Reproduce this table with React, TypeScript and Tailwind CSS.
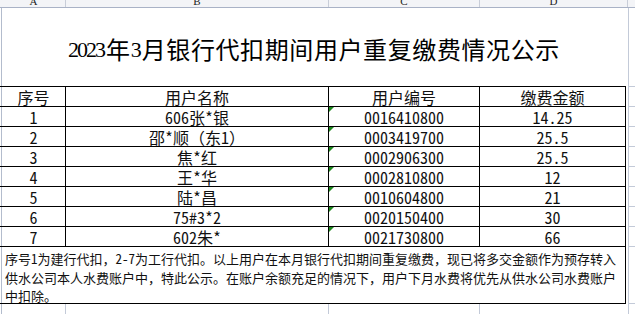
import React from 'react';

// 银行代扣重复缴费公示表（Excel 截图样式）
interface PayRow {
    no: string;
    name: string;
    id: string;
    amount: string;
}

const rows: PayRow[] = [
    { no: '1', name: '606张*银', id: '0016410800', amount: '14.25' },
    { no: '2', name: '邵*顺（东1）', id: '0003419700', amount: '25.5' },
    { no: '3', name: '焦*红', id: '0002906300', amount: '25.5' },
    { no: '4', name: '王*华', id: '0002810800', amount: '12' },
    { no: '5', name: '陆*昌', id: '0010604800', amount: '21' },
    { no: '6', name: '75#3*2', id: '0020150400', amount: '30' },
    { no: '7', name: '602朱*', id: '0021730800', amount: '66' },
];

const cellFont = { fontFamily: '"Noto Sans Mono CJK SC", "Noto Sans CJK SC", monospace' };

// 右侧 E 列的网格线
const ColE = () => (
    <div className="w-[9px] pl-[2px] flex">
        <div className="flex-1 border-l border-b border-[#c3cad8]" />
    </div>
);

const Gutter = () => <div className="w-[2px] border-r border-[#b3bccd] flex-shrink-0" />;

export default function App() {
    return (
        <div className="w-[635px] h-[314px] overflow-hidden bg-white text-[#111]">
            {/* 列标 A B C D */}
            <div className="flex h-[8px] bg-[#f3f4f7] border-b border-[#a9b2c6] text-[11px] leading-[11px] text-[#222] font-['Liberation_Serif',serif]">
                <div className="w-[2px]" />
                <div className="w-[64px] border-r border-[#c8cdd8] flex items-end justify-center overflow-hidden">A</div>
                <div className="w-[263px] border-r border-[#c8cdd8] flex items-end justify-center overflow-hidden">B</div>
                <div className="w-[151px] border-r border-[#c8cdd8] flex items-end justify-center overflow-hidden">C</div>
                <div className="w-[148px] border-r border-[#c8cdd8] flex items-end justify-center overflow-hidden">D</div>
                <div className="flex-1" />
            </div>

            {/* 标题 */}
            <div className="flex h-[79px]">
                <div className="w-[626px] flex border-b border-black">
                    <Gutter />
                    <div className="flex-1 flex items-center justify-center pt-[4px] text-[24px] tracking-[0.6px] font-['Noto_Sans_CJK_SC',sans-serif] text-black">
                        <span className="font-['Liberation_Serif','Noto_Sans_CJK_SC',serif] text-[22px] tracking-[-2px] mr-[2px]">2023</span>
                        年
                        <span className="font-['Liberation_Serif','Noto_Sans_CJK_SC',serif] text-[22px] tracking-[-2px] mr-[2px]">3</span>
                        月银行代扣期间用户重复缴费情况公示
                    </div>
                </div>
                <ColE />
            </div>

            {/* 表头 */}
            <div className="flex h-[20px]" style={cellFont}>
                <div className="w-[626px] flex border-b border-black text-[16px] leading-none">
                    <Gutter />
                    <div className="w-[64px] border-r border-black flex items-center justify-center pt-[1px]">序号</div>
                    <div className="w-[263px] border-r border-black flex items-center justify-center pt-[1px]">用户名称</div>
                    <div className="w-[151px] border-r border-black flex items-center justify-center pt-[1px]">用户编号</div>
                    <div className="w-[146px] border-r border-black flex items-center justify-center pt-[1px]">缴费金额</div>
                </div>
                <ColE />
            </div>

            {rows.map((r) => (
                <div key={r.no} className="flex h-[20px]" style={cellFont}>
                    <div className="w-[626px] flex border-b border-black text-[16px] leading-none">
                        <Gutter />
                        <div className="w-[64px] border-r border-black flex items-center justify-center pt-[1px]">{r.no}</div>
                        <div className="w-[263px] border-r border-black flex items-center justify-center pt-[1px]">{r.name}</div>
                        <div className="relative w-[151px] border-r border-black flex items-center justify-center pt-[1px]">
                            {/* 以文本形式存储的数字 绿色角标 */}
                            <span className="absolute left-0 top-0 w-0 h-0 border-t-[5px] border-t-[#1f8a1f] border-r-[5px] border-r-transparent" />
                            {r.id}
                        </div>
                        <div className="w-[146px] border-r border-black flex items-center justify-center pt-[1px]">{r.amount}</div>
                    </div>
                    <ColE />
                </div>
            ))}

            {/* 备注 */}
            <div className="flex h-[57px]" style={cellFont}>
                <div className="w-[626px] flex border-b border-black">
                    <Gutter />
                    <div className="flex-1 border-r border-black px-[3px] pt-[2px] text-[13px] leading-[19px] whitespace-nowrap">
                        <div>序号1为建行代扣，2-7为工行代扣。以上用户在本月银行代扣期间重复缴费，现已将多交金额作为预存转入</div>
                        <div>供水公司本人水费账户中，特此公示。在账户余额充足的情况下，用户下月水费将优先从供水公司水费账户</div>
                        <div className="-mt-[1px]">中扣除。</div>
                    </div>
                </div>
                <ColE />
            </div>

            {/* 空白行 */}
            <div className="flex h-[12px]">
                <Gutter />
                <div className="w-[64px] border-r border-[#c3cad8]" />
                <div className="w-[263px] border-r border-[#c3cad8]" />
                <div className="w-[151px] border-r border-[#c3cad8]" />
                <div className="w-[146px]" />
                <div className="w-[9px] pl-[2px] flex">
                    <div className="flex-1 border-l border-[#c3cad8]" />
                </div>
            </div>
        </div>
    );
}
